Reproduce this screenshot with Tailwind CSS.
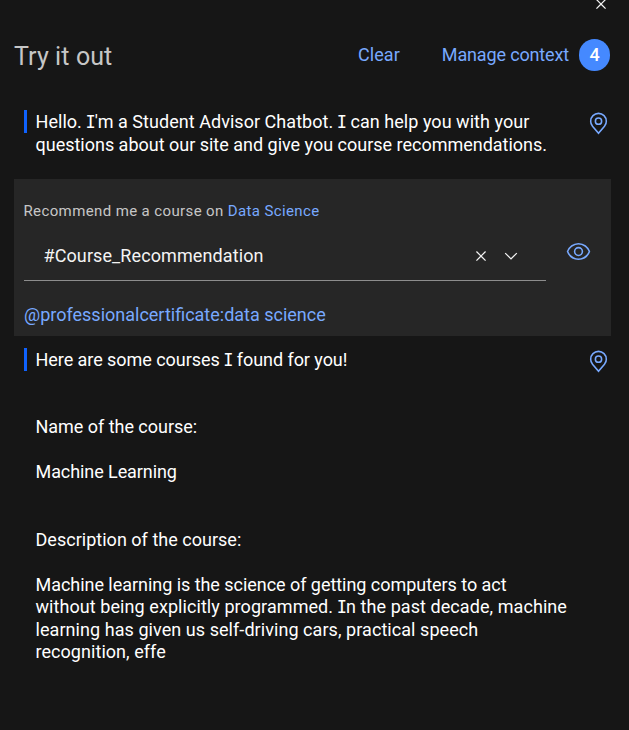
<!DOCTYPE html>
<html lang="en">
<head>
<meta charset="utf-8">
<title>Try it out</title>
<script src="https://cdn.jsdelivr.net/npm/@tailwindcss/browser@4"></script>
</head>
<body class="bg-[#161616] font-['Roboto','Noto_Sans',sans-serif] text-[18px] leading-[22.5px] text-white">
<svg class="hidden">
  <symbol id="close" viewBox="0 0 32 32"><path d="M24 9.4 22.6 8 16 14.6 9.4 8 8 9.4 14.6 16 8 22.6 9.4 24 16 17.4 22.6 24 24 22.6 17.4 16 24 9.4z"/></symbol>
  <symbol id="pin" viewBox="0 0 32 32"><path d="M16,18a5,5,0,1,1,5-5A5.0057,5.0057,0,0,1,16,18Zm0-8a3,3,0,1,0,3,3A3.0033,3.0033,0,0,0,16,10Z"/><path d="M16,30,7.5645,20.0513c-.0479-.0571-.3482-.4515-.3482-.4515A10.8888,10.8888,0,0,1,5,13a11,11,0,0,1,22,0,10.8844,10.8844,0,0,1-2.2148,6.5973l-.0015.0025s-.3.3944-.3447.4474ZM8.8125,18.395c.001.0007.2334.3082.2866.3744L16,26.9079l6.91-8.15c.0439-.0552.2783-.3649.2788-.3657A8.901,8.901,0,0,0,25,13,9,9,0,1,0,7,13a8.9054,8.9054,0,0,0,1.8125,5.395Z"/></symbol>
</svg>
<main class="flex h-[730px] w-[629px] flex-col overflow-hidden whitespace-nowrap">
  <div class="flex h-[15px] shrink-0 items-end justify-end pb-px pr-[18px]">
    <svg class="size-5 shrink-0 fill-[#f4f4f4]"><use href="#close"/></svg>
  </div>
  <header class="flex h-20 shrink-0 items-center pl-[14px] pr-[19px]">
    <h1 class="grow pt-1 text-[25px] leading-8 tracking-[0.1px] text-[#c6c6c6]">Try it out</h1>
    <button class="mr-[42px] text-[18px] tracking-[0.08px] text-[#78a9ff]">Clear</button>
    <button class="mr-[10px] text-[18px] tracking-[-0.15px] text-[#78a9ff]">Manage context</button>
    <span class="flex h-8 w-[31px] items-center justify-center rounded-full bg-[#4589ff] text-[18px] font-medium">4</span>
  </header>
  <section class="mt-[15px] flex h-[69px] shrink-0 pl-6">
    <div class="h-[23px] w-[3px] bg-[#0f62fe]"></div>
    <div class="ml-2 w-[551px] pl-[0.5px] pt-px">
      <p class="tracking-[0.04px]">Hello. <span class="-mx-px font-['DejaVu_Sans_Mono'] text-[17px] leading-none">I</span>'m a Student Advisor Chatbot. <span class="-mx-px font-['DejaVu_Sans_Mono'] text-[17px] leading-none">I</span> can help you with your</p>
      <p class="tracking-[-0.01px]">questions about our site and give you course recommendations.</p>
    </div>
    <svg class="mt-px size-[25px] fill-[#78a9ff]"><use href="#pin"/></svg>
  </section>
  <section class="ml-[14px] h-[157px] w-[597px] shrink-0 bg-[#262626] pl-[10px] pt-[21px]">
    <p class="-ml-[0.5px] text-[15px] tracking-[0.38px] text-[#c6c6c6]">Recommend me a course on <span class="text-[#78a9ff]">Data Science</span></p>
    <div class="flex items-start">
      <div class="mt-[8px] flex h-[50px] w-[522px] items-center border-b border-[#8d8d8d] pl-5 pr-[25px] pt-[2px]">
        <span class="-ml-[0.5px] grow tracking-[0.1px] text-[#f4f4f4]">#Course_Recommendation</span>
        <svg class="mr-[10px] size-5 fill-[#f4f4f4]"><use href="#close"/></svg>
        <svg class="size-5 fill-[#f4f4f4]" viewBox="0 0 16 16"><path d="M8 11 3 6 3.7 5.3 8 9.6 12.3 5.3 13 6z"/></svg>
      </div>
      <svg class="ml-5 mt-[16px] size-[25px] fill-[#78a9ff]" viewBox="0 0 32 32"><path d="M30.94,15.66A16.69,16.69,0,0,0,16,5,16.69,16.69,0,0,0,1.06,15.66a1,1,0,0,0,0,.68A16.69,16.69,0,0,0,16,27,16.69,16.69,0,0,0,30.94,16.34,1,1,0,0,0,30.94,15.66ZM16,25c-5.3,0-10.9-3.93-12.93-9C5.1,10.93,10.7,7,16,7s10.9,3.93,12.93,9C26.9,21.07,21.3,25,16,25Z"/><path d="M16,10a6,6,0,1,0,6,6A6,6,0,0,0,16,10Zm0,10a4,4,0,1,1,4-4A4,4,0,0,1,16,20Z"/></svg>
    </div>
    <p class="mt-[23px] text-[#78a9ff]">@professionalcertificate:data science</p>
  </section>
  <section class="mt-3 flex shrink-0 pl-6">
    <div class="h-[23px] w-[3px] bg-[#0f62fe]"></div>
    <div class="ml-2 w-[551px] pl-[0.5px] pt-[0.6px]">
      <p class="tracking-[-0.05px]">Here are some courses <span class="-mx-px font-['DejaVu_Sans_Mono'] text-[17px] leading-none">I</span> found for you!</p>
      <p class="mt-[45px] tracking-[-0.03px]">Name of the course:</p>
      <p class="mt-[22.5px] tracking-[-0.08px]">Machine Learning</p>
      <p class="mt-[45px] tracking-[0.02px]">Description of the course:</p>
      <p class="mt-[22.5px] tracking-[-0.04px]">Machine learning is the science of getting computers to act</p>
      <p class="tracking-[0.07px]">without being explicitly programmed. <span class="-mx-px font-['DejaVu_Sans_Mono'] text-[17px] leading-none">I</span>n the past decade, machine</p>
      <p class="tracking-[0.06px]">learning has given us self-driving cars, practical speech</p>
      <p class="tracking-[0.05px]">recognition, effe</p>
    </div>
    <svg class="mt-px size-[25px] fill-[#78a9ff]"><use href="#pin"/></svg>
  </section>
</main>
</body>
</html>
